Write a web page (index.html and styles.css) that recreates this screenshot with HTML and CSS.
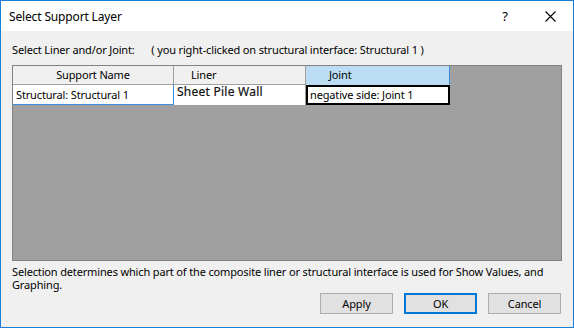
FILE: index.html
```html
<!DOCTYPE html>
<html lang="en">
<head>
    <meta charset="UTF-8">
    <title>Select Support Layer</title>
    <link rel="stylesheet" href="styles.css">
</head>
<body>
    <div id="dialog">

    <div id="titlebar">
        <span id="title">Select Support Layer</span>
        <span class="tbtn" id="help">?</span>
        <span class="tbtn" id="close">
            <svg width="11" height="11" viewBox="0 0 11 11"><path d="M0.5 0.5 L10.5 10.5 M10.5 0.5 L0.5 10.5" stroke="#000" stroke-width="1.1" fill="none"/></svg>
        </span>
    </div>

    <div id="content">

    <div id="prompt">
        <span>Select Liner and/or Joint:</span>
        <span id="prompt-info">( you right-clicked on structural interface: Structural 1 )</span>
    </div>

    <div id="grid">
        <div class="row header">
            <div class="cell c1">Support Name</div>
            <div class="cell c2">Liner</div>
            <div class="cell c3 selected">Joint</div>
        </div>
        <div class="row data">
            <div class="cell c1 focus">Structural: Structural 1</div>
            <div class="cell c2 liner">Sheet Pile Wall</div>
            <div class="cell c3 current">negative side: Joint 1</div>
        </div>
    </div>

    <p id="note">Selection determines which part of the composite liner or structural interface is used for Show Values, and Graphing.</p>

    <div id="buttons">
        <button>Apply</button>
        <button class="default">OK</button>
        <button>Cancel</button>
    </div>

    </div>

    </div>
</body>
</html>
```

FILE: styles.css
```css
body{
    margin: 0px;
    font-family: 'Noto Sans', 'Open Sans', sans-serif;
    font-size: 11px;
    letter-spacing: -0.15px;
    color: #000;
}
#dialog{
    width: 574px;
    height: 328px;
    box-sizing: border-box;
    border: 1px solid #1a7fd4;
    display: flex;
    flex-direction: column;
    background-color: #f0f0f0;
}
#titlebar{
    height: 30px;
    background-color: white;
    display: flex;
    align-items: center;
    padding-left: 8px;
}
#title{
    flex: 1;
    font-size: 12px;
}
.tbtn{
    width: 44px;
    text-align: center;
    display: flex;
    justify-content: center;
    align-items: center;
    height: 30px;
}
#help{
    font-size: 13px;
}
#close{
    width: 46px;
}
#content{
    flex: 1;
    padding: 11px 11px 0 11px;
}
#prompt{
    height: 16px;
    line-height: 16px;
}
#prompt-info{
    margin-left: 14px;
}
#grid{
    margin-top: 7px;
    height: 194px;
    border: 1px solid #828282;
    background-color: #a0a0a0;
}
.row{
    display: flex;
}
.header{
    height: 19px;
}
.header .cell{
    background-color: #f0f0f0;
    line-height: 18px;
    border-right: 1px solid #a0a0a0;
    border-bottom: 1px solid #a0a0a0;
}
.c1{
    width: 160px;
}
.c2{
    width: 131px;
}
.c3{
    width: 143px;
}
.header .c1{
    text-align: center;
}
.header .c2{
    padding-left: 17px;
    width: 114px;
}
.header .c3{
    padding-left: 23px;
    width: 120px;
}
.header .selected{
    background-color: #bcdcf4;
    border-right-color: #3b8ad8;
    border-bottom-color: #bcdcf4;
}
.data{
    height: 20px;
}
.data .cell{
    background-color: white;
    box-sizing: border-box;
    height: 20px;
    line-height: 19px;
    border-right: 1px solid #a0a0a0;
    padding-left: 3px;
}
.data .c1{
    width: 161px;
}
.data .focus{
    border-right: 1px solid #3c8fdc;
    border-bottom: 1px solid #3c8fdc;
}
.data .liner{
    width: 132px;
    line-height: 14px;
    font-size: 12px;
    letter-spacing: 0.25px;
    color: #111;
    -webkit-text-stroke: 0.2px #111;
}
.data .current{
    width: 144px;
    border: 2px solid black;
    line-height: 15px;
    padding-left: 2px;
}
#note{
    margin: 4px 0 0 0;
    line-height: 13px;
}
#buttons{
    display: flex;
    justify-content: flex-end;
    gap: 11px;
    margin-top: 2px;
    padding-right: 1px;
}
button{
    width: 73px;
    height: 21px;
    background-color: #e1e1e1;
    border: 1px solid #adadad;
    font-family: 'Noto Sans', 'Open Sans', sans-serif;
    font-size: 11px;
    letter-spacing: -0.15px;
    padding: 0;
}
button.default{
    border: 2px solid #0078d7;
}
```
